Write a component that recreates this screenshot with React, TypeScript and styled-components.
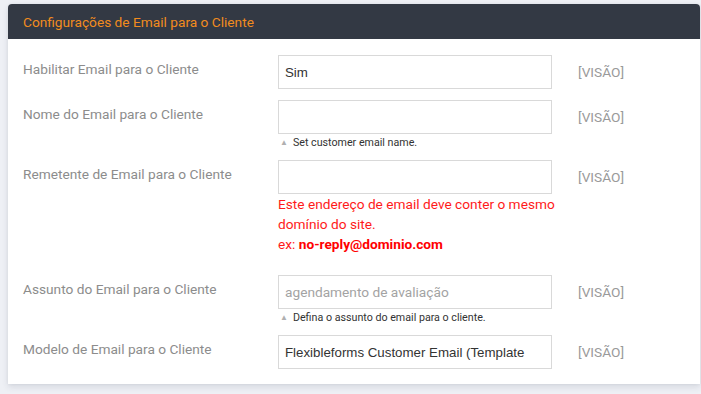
import styled, { createGlobalStyle } from "styled-components";

const GlobalStyle = createGlobalStyle`
  body {
    margin: 0;
    background: #eef0f5;
    font-family: Roboto, "Liberation Sans", Arial, sans-serif;
  }
`;

type Field = {
  label: string;
  value: string;
  muted?: boolean;
  hint?: string;
  error?: boolean;
};

const fields: Field[] = [
  { label: "Habilitar Email para o Cliente", value: "Sim" },
  { label: "Nome do Email para o Cliente", value: "", hint: "Set customer email name." },
  { label: "Remetente de Email para o Cliente", value: "", error: true },
  {
    label: "Assunto do Email para o Cliente",
    value: "agendamento de avaliação",
    muted: true,
    hint: "Defina o assunto do email para o cliente.",
  },
  { label: "Modelo de Email para o Cliente", value: "Flexibleforms Customer Email (Template" },
];

const App = () => {
  return (
    <Page>
      <GlobalStyle />
      <Card>
        <CardHeader>Configurações de Email para o Cliente</CardHeader>
        <CardBody>
          {fields.map((field, index) => (
            <Row key={index}>
              <Label>{field.label}</Label>
              <FieldColumn>
                <InputBox $muted={field.muted}>{field.value}</InputBox>
                {field.hint && (
                  <Hint>
                    <Triangle>▲</Triangle>
                    {field.hint}
                  </Hint>
                )}
                {field.error && (
                  <ErrorText>
                    Este endereço de email deve conter o mesmo domínio do site.
                    <br />
                    ex: <strong>no-reply@dominio.com</strong>
                  </ErrorText>
                )}
              </FieldColumn>
              <Scope>[VISÃO]</Scope>
            </Row>
          ))}
        </CardBody>
      </Card>
    </Page>
  );
};

export default App;

const Page = styled.div`
  padding: 4px 1px 0 8px;
  height: 394px;
  box-sizing: border-box;
  overflow: hidden;
`;

const Card = styled.div`
  background: #ffffff;
  border-radius: 4px 4px 0 0;
  box-shadow: 0 3px 6px rgba(40, 50, 70, 0.12), 0 0 3px rgba(40, 50, 70, 0.06);
`;

const CardHeader = styled.div`
  height: 35px;
  display: flex;
  align-items: center;
  padding: 0 15px;
  background: #333944;
  border-radius: 4px 4px 0 0;
  color: #f28c1e;
  font-size: 13.7px;
`;

const CardBody = styled.div`
  padding: 16px 15px 4px;
`;

const Row = styled.div`
  display: grid;
  grid-template-columns: 255px 274px auto;
  align-items: start;
  margin-bottom: 11px;
`;

const Label = styled.div`
  padding-top: 4px;
  line-height: 20px;
  font-size: 13.7px;
  color: #8c8c8c;
`;

const FieldColumn = styled.div`
  display: flex;
  flex-direction: column;
`;

const InputBox = styled.div<{ $muted?: boolean }>`
  height: 34px;
  box-sizing: border-box;
  border: 1px solid #d9d9d9;
  padding: 0 6px;
  display: flex;
  align-items: center;
  font-family: ${(p) => (p.$muted ? "Roboto, sans-serif" : "\"Liberation Sans\", Arial, sans-serif")};
  font-size: ${(p) => (p.$muted ? "13.7px" : "13.3px")};
  color: ${(p) => (p.$muted ? "#a3a3a3" : "#333333")};
  white-space: nowrap;
  overflow: hidden;
`;

const Hint = styled.div`
  display: flex;
  align-items: center;
  gap: 5px;
  height: 14px;
  padding: 1px 0 0 2px;
  font-size: 10.7px;
  color: #333333;
`;

const Triangle = styled.span`
  font-size: 8px;
  color: #b0b0b0;
`;

const ErrorText = styled.div`
  width: 290px;
  padding-bottom: 21px;
  margin-bottom: -11px;
  line-height: 20px;
  font-size: 13.7px;
  color: #ff1a1a;

  strong {
    font-weight: 700;
    color: #ff0000;
  }
`;

const Scope = styled.div`
  padding: 7px 0 0 26px;
  line-height: 20px;
  font-size: 13.7px;
  color: #9a9a9a;
`;
